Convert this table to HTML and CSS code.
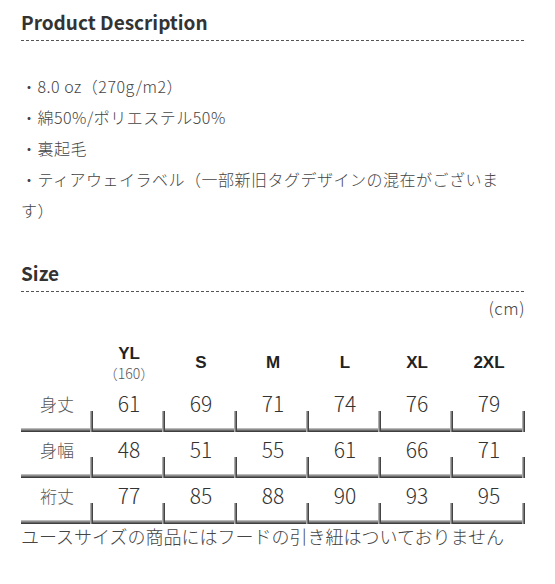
FILE: index.html
```html
<!DOCTYPE html>
<html lang="ja">
<head>
<meta charset="utf-8">
<title>Product Description</title>
<link rel="stylesheet" href="styles.css">
</head>
<body>
<div class="page">
  <h2 class="sec-title">Product Description</h2>
  <ul class="spec-list">
    <li>・8.0 oz（270g/m2）</li>
    <li>・綿50%/ポリエステル50%</li>
    <li>・裏起毛</li>
    <li>・ティアウェイラベル（一部新旧タグデザインの混在がございます）</li>
  </ul>

  <h2 class="sec-title sec-size">Size</h2>
  <div class="unit">(cm)</div>
  <table class="size-table">
    <thead>
      <tr>
        <th class="corner"></th>
        <th><span class="sz">YL</span><span class="sub">（160）</span></th>
        <th><span class="sz">S</span></th>
        <th><span class="sz">M</span></th>
        <th><span class="sz">L</span></th>
        <th><span class="sz">XL</span></th>
        <th><span class="sz">2XL</span></th>
      </tr>
    </thead>
    <tbody>
      <tr>
        <td class="lbl">身丈</td><td>61</td><td>69</td><td>71</td><td>74</td><td>76</td><td>79</td>
      </tr>
      <tr>
        <td class="lbl">身幅</td><td>48</td><td>51</td><td>55</td><td>61</td><td>66</td><td>71</td>
      </tr>
      <tr>
        <td class="lbl">裄丈</td><td>77</td><td>85</td><td>88</td><td>90</td><td>93</td><td>95</td>
      </tr>
    </tbody>
  </table>
  <p class="note">ユースサイズの商品にはフードの引き紐はついておりません</p>
</div>
</body>
</html>
```

FILE: styles.css
```css
html, body {
  margin: 0;
  padding: 0;
  background: #fff;
}
body {
  font-family: "Noto Sans CJK JP", "Noto Sans", sans-serif;
  color: #444;
}
.page {
  width: 504px;
  margin-left: 21px;
}
.sec-title {
  margin: 0;
  padding: 10px 0 7px;
  font-size: 19px;
  line-height: 24px;
  font-weight: 700;
  color: #333;
  background: repeating-linear-gradient(to right, #555 0 3px, transparent 3px 5px) left bottom / 100% 1px no-repeat;
}
.spec-list {
  list-style: none;
  margin: 30px 0 0;
  padding: 0;
  width: 490px;
  font-size: 16px;
  font-weight: 300;
  line-height: 31px;
  letter-spacing: 0.5px;
  color: #444;
}
.sec-size {
  margin-top: 25px;
}
.unit {
  margin-top: 6px;
  text-align: right;
  font-size: 17px;
  font-weight: 300;
  line-height: 20px;
  letter-spacing: 0.5px;
  color: #444;
}
.size-table {
  margin-top: 22px;
  width: 504px;
  border-collapse: collapse;
  border-spacing: 0;
  table-layout: fixed;
}
.size-table th,
.size-table td {
  width: 72px;
  height: 46px;
  padding: 0 0 12px;
  box-sizing: border-box;
  text-align: center;
  vertical-align: middle;
}
.size-table th {
  padding: 0;
  color: #222;
}
.sz {
  display: block;
  font-family: "Liberation Sans", Arial, sans-serif;
  font-weight: 700;
  font-size: 17px;
  line-height: 20px;
}
.sub {
  display: block;
  font-size: 14px;
  line-height: 18px;
  font-weight: 300;
  color: #555;
}
.size-table td {
  font-size: 21px;
  font-weight: 300;
  color: #333;
  background:
    linear-gradient(to right, #c8c8c8, #2a2a2a) right bottom / 3px 21px no-repeat,
    linear-gradient(to bottom, #d0d0d0, #8a8a8a 40%, #2a2a2a) left bottom / 100% 4px no-repeat;
}
.size-table td.lbl {
  font-size: 17px;
  color: #555;
}
.note {
  margin: 0;
  font-size: 18px;
  font-weight: 300;
  line-height: 24px;
  color: #444;
}
```
